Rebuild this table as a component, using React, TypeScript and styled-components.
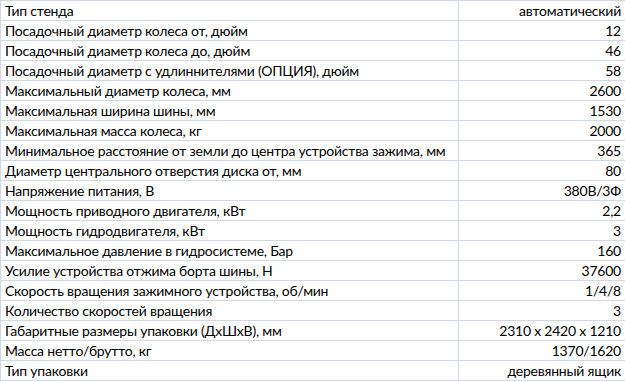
import React from "react";
import styled, { createGlobalStyle } from "styled-components";

const Global = createGlobalStyle`
  html, body { margin: 0; padding: 0; background: #ffffff; }
  body { font-family: Lato, "Open Sans", sans-serif; }
`;

const Table = styled.table`
  border-collapse: collapse;
  width: 625px;
  table-layout: fixed;
  font-family: Lato, "Noto Sans", sans-serif;
  font-size: 14px;
  letter-spacing: -0.22px;
  color: #000;
`;

const Row = styled.tr`
  height: 20px;
`;

const Cell = styled.td<{ $align?: "left" | "right" }>`
  border: 1px solid #d0d7e5;
  padding: 0 4px 0 4px;
  height: 19px;
  line-height: 19px;
  white-space: nowrap;
  overflow: hidden;
  text-align: ${(p) => p.$align ?? "left"};
`;

const rows: [string, string][] = [
  ["Тип стенда", "автоматический"],
  ["Посадочный диаметр колеса от, дюйм", "12"],
  ["Посадочный диаметр колеса до, дюйм", "46"],
  ["Посадочный диаметр с удлиннителями (ОПЦИЯ), дюйм", "58"],
  ["Максимальный диаметр колеса, мм", "2600"],
  ["Максимальная ширина шины, мм", "1530"],
  ["Максимальная масса колеса, кг", "2000"],
  ["Минимальное расстояние от земли до центра устройства зажима, мм", "365"],
  ["Диаметр центрального отверстия диска от, мм", "80"],
  ["Напряжение питания, В", "380В/3Ф"],
  ["Мощность приводного двигателя, кВт", "2,2"],
  ["Мощность гидродвигателя, кВт", "3"],
  ["Максимальное давление в гидросистеме, Бар", "160"],
  ["Усилие устройства отжима борта шины, Н", "37600"],
  ["Скорость вращения зажимного устройства, об/мин", "1/4/8"],
  ["Количество скоростей вращения", "3"],
  ["Габаритные размеры упаковки (ДхШхВ), мм", "2310 x 2420 x 1210"],
  ["Масса нетто/брутто, кг", "1370/1620"],
  ["Тип упаковки", "деревянный ящик"],
];

export default function App() {
  return (
    <>
      <Global />
      <Table>
        <colgroup>
          <col style={{ width: 458 }} />
          <col style={{ width: 167 }} />
        </colgroup>
        <tbody>
          {rows.map(([k, v]) => (
            <Row key={k}>
              <Cell>{k}</Cell>
              <Cell $align="right">{v}</Cell>
            </Row>
          ))}
        </tbody>
      </Table>
    </>
  );
}
